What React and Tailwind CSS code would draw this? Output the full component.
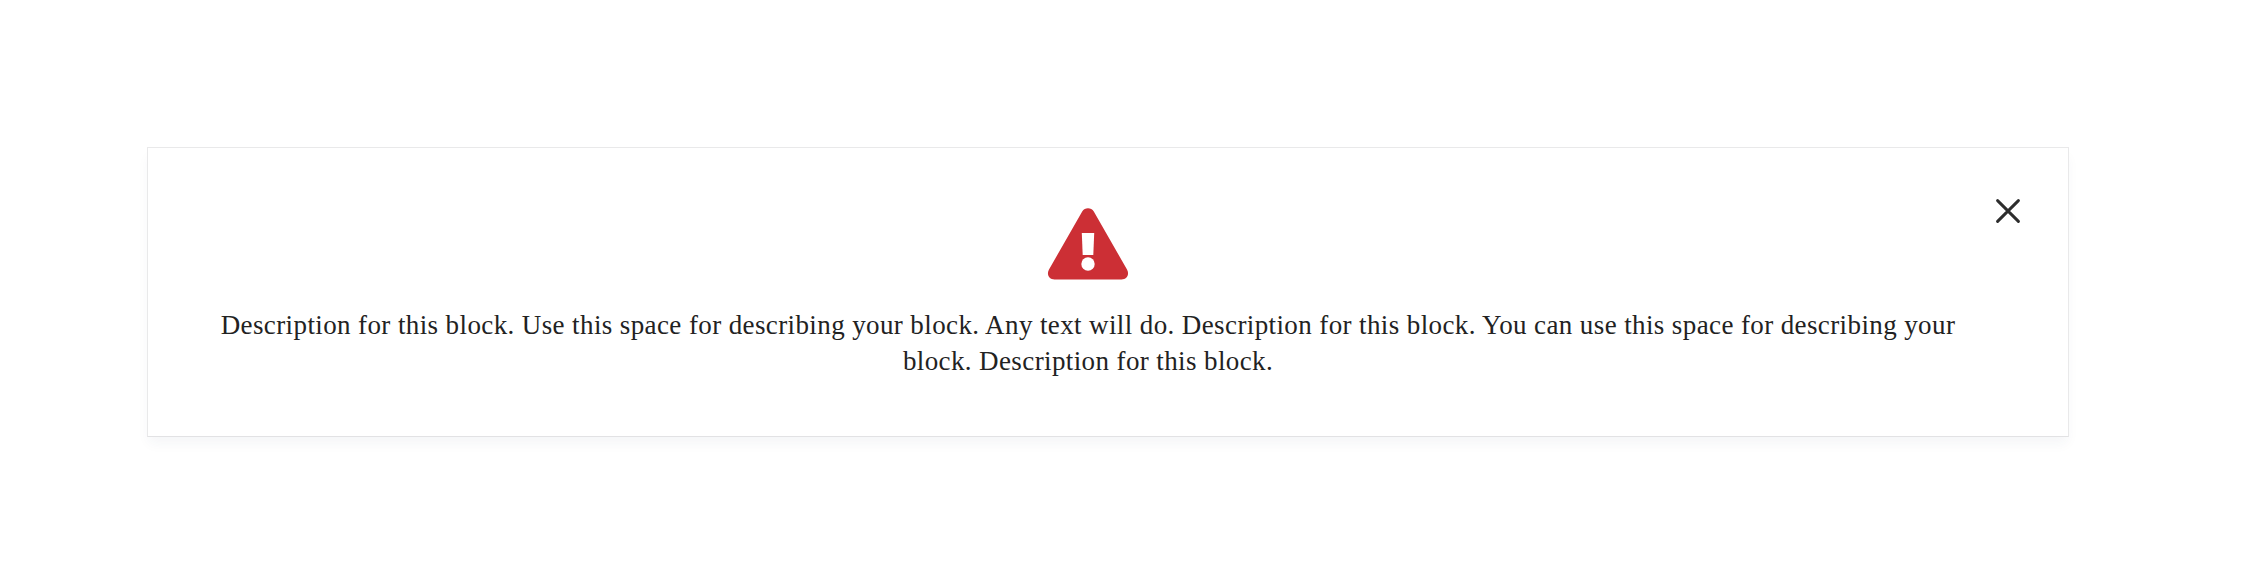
function WarningIcon() {
  return (
    <svg className="block h-[72px] w-[82px]" viewBox="0 0 82 72" aria-hidden="true">
      <path
        fill="#cc2f35"
        d="M35.2 3.5C37.8-.7 44.2-.7 46.8 3.5L80 61.5C82.8 66.3 79.8 71.5 74.5 71.5H7.5C2.2 71.5-.8 66.3 2 61.5Z"
      />
      <path fill="#fff" d="M34.8 25h12.4l-.9 22H35.7Z" />
      <circle cx="41" cy="56" r="6.7" fill="#fff" />
    </svg>
  );
}

function CloseIcon() {
  return (
    <svg className="block size-6" viewBox="0 0 24 24" aria-hidden="true">
      <path d="M1.6 1.6 22.4 22.4M22.4 1.6 1.6 22.4" fill="none" stroke="#2d2d2d" strokeWidth="2.9" strokeLinecap="round" />
    </svg>
  );
}

export default function App() {
  return (
    <main className="h-[588px] w-[2266px] bg-white pt-[147px] pl-[147px]">
      <section className="flex h-[290px] w-[1922px] items-start border border-[#e9e9ea] border-b-[#e2e2e4] bg-white pr-[48px] pl-[72px] shadow-[0_8px_12px_-2px_rgba(40,50,90,0.05)]">
        <div className="flex w-[1736px] flex-col items-center pt-[60px]">
          <WarningIcon />
          <p className="mt-[27px] text-center font-['Palatino_Linotype',Palatino,'Liberation_Serif',serif] text-[27px] leading-[36px] tracking-[0.39px] whitespace-nowrap text-[#222]">
            Description for this block. Use this space for describing your block. Any text will do. Description for this block. You can use this space for describing your
            <br />
            block. Description for this block.
          </p>
        </div>
        <button type="button" aria-label="Close" className="mt-[51px] ml-auto">
          <CloseIcon />
        </button>
      </section>
    </main>
  );
}
